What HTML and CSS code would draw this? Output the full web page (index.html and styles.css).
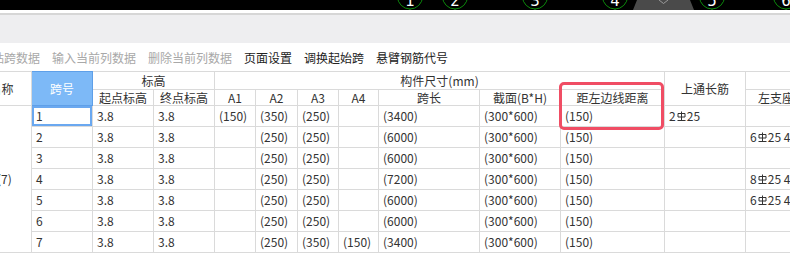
FILE: index.html
```html
<!DOCTYPE html>
<html lang="zh-CN">
<head>
    <meta charset="UTF-8">
    <title>梁平法表格</title>
    <link rel="stylesheet" href="styles.css">
</head>
<body>
<div class="viewport">
    <svg class="axis" width="790" height="10" viewBox="0 0 790 10">
        <g class="bubble"><circle cx="410" cy="-3.5" r="12.5"/><line x1="410" y1="9" x2="410" y2="10"/><text x="410" y="6">1</text></g>
        <g class="bubble"><circle cx="455" cy="-3.5" r="12.5"/><line x1="455" y1="9" x2="455" y2="10"/><text x="455" y="6">2</text></g>
        <g class="bubble"><circle cx="535" cy="-3.5" r="12.5"/><line x1="535" y1="9" x2="535" y2="10"/><text x="535" y="6">3</text></g>
        <g class="bubble"><circle cx="615" cy="-3.5" r="12.5"/><line x1="615" y1="9" x2="615" y2="10"/><text x="615" y="6">4</text></g>
        <polygon class="tab" points="637,0 690,0 694,10 633,10"/>
        <polyline class="chev" points="659,0 663.5,3.5 668,0"/>
        <g class="bubble"><circle cx="712" cy="-3.5" r="12.5"/><line x1="712" y1="9" x2="712" y2="10"/><text x="712" y="6">5</text></g>
        <g class="bubble"><circle cx="786" cy="-3.5" r="12.5"/><line x1="786" y1="9" x2="786" y2="10"/><text x="786" y="6">6</text></g>
    </svg>
</div>
<div class="ribbon"></div>
<div class="toolbar">
    <span class="tool off">粘贴跨数据</span>
    <span class="tool off">输入当前列数据</span>
    <span class="tool off">删除当前列数据</span>
    <span class="tool">页面设置</span>
    <span class="tool">调换起始跨</span>
    <span class="tool">悬臂钢筋代号</span>
</div>
<div class="grid-wrap">
    <table class="grid">
        <colgroup>
            <col style="width:60px"><col style="width:61px"><col style="width:61px"><col style="width:61px">
            <col style="width:41px"><col style="width:42px"><col style="width:41px"><col style="width:40px">
            <col style="width:101px"><col style="width:81px"><col style="width:104px"><col style="width:81px">
            <col style="width:86px"><col style="width:90px">
        </colgroup>
        <thead>
            <tr class="h1">
                <th rowspan="2">名称</th>
                <th rowspan="2" class="key">跨号</th>
                <th colspan="2">标高</th>
                <th colspan="7">构件尺寸(mm)</th>
                <th rowspan="2">上通长筋</th>
                <th colspan="2"></th>
            </tr>
            <tr class="h2">
                <th>起点标高</th><th>终点标高</th>
                <th>A1</th><th>A2</th><th>A3</th><th>A4</th>
                <th>跨长</th><th>截面(B*H)</th><th>距左边线距离</th>
                <th class="cut">左支座钢筋</th><th></th>
            </tr>
        </thead>
        <tbody>
            <tr>
                <td rowspan="7" class="name">KL1(7)</td>
                <td class="sel">1</td><td>3.8</td><td>3.8</td>
                <td>(150)</td><td>(350)</td><td>(250)</td><td></td>
                <td>(3400)</td><td>(300*600)</td><td>(150)</td>
                <td>2<svg class="bar" width="9" height="11" viewBox="0 0 9 11"><path d="M1 2.5h7v3.5H1zM4.5 0.5v9M0.5 9.5h8"/></svg>25</td><td></td><td></td>
            </tr>
            <tr>
                <td>2</td><td>3.8</td><td>3.8</td>
                <td></td><td>(250)</td><td>(250)</td><td></td>
                <td>(6000)</td><td>(300*600)</td><td>(150)</td>
                <td></td><td>6<svg class="bar" width="9" height="11" viewBox="0 0 9 11"><path d="M1 2.5h7v3.5H1zM4.5 0.5v9M0.5 9.5h8"/></svg>25 4/2</td><td></td>
            </tr>
            <tr>
                <td>3</td><td>3.8</td><td>3.8</td>
                <td></td><td>(250)</td><td>(250)</td><td></td>
                <td>(6000)</td><td>(300*600)</td><td>(150)</td>
                <td></td><td></td><td></td>
            </tr>
            <tr>
                <td>4</td><td>3.8</td><td>3.8</td>
                <td></td><td>(250)</td><td>(250)</td><td></td>
                <td>(7200)</td><td>(300*600)</td><td>(150)</td>
                <td></td><td>8<svg class="bar" width="9" height="11" viewBox="0 0 9 11"><path d="M1 2.5h7v3.5H1zM4.5 0.5v9M0.5 9.5h8"/></svg>25 4/4</td><td></td>
            </tr>
            <tr>
                <td>5</td><td>3.8</td><td>3.8</td>
                <td></td><td>(250)</td><td>(250)</td><td></td>
                <td>(6000)</td><td>(300*600)</td><td>(150)</td>
                <td></td><td>6<svg class="bar" width="9" height="11" viewBox="0 0 9 11"><path d="M1 2.5h7v3.5H1zM4.5 0.5v9M0.5 9.5h8"/></svg>25 4/2</td><td></td>
            </tr>
            <tr>
                <td>6</td><td>3.8</td><td>3.8</td>
                <td></td><td>(250)</td><td>(250)</td><td></td>
                <td>(6000)</td><td>(300*600)</td><td>(150)</td>
                <td></td><td></td><td></td>
            </tr>
            <tr>
                <td>7</td><td>3.8</td><td>3.8</td>
                <td></td><td>(250)</td><td>(350)</td><td>(150)</td>
                <td>(3400)</td><td>(300*600)</td><td>(150)</td>
                <td></td><td></td><td></td>
            </tr>
        </tbody>
    </table>
    <div class="mark"></div>
</div>
</body>
</html>
```

FILE: styles.css
```css
html, body {
    margin: 0;
    width: 790px;
    height: 266px;
    overflow: hidden;
    background: #fff;
    font-family: "Noto Sans CJK SC", "Noto Sans", sans-serif;
    font-size: 12px;
    color: #333;
}

/* drawing strip at the top */
.viewport {
    height: 10px;
    background: #000;
    overflow: hidden;
}

.axis {
    display: block;
}

.bubble circle {
    fill: #000;
    stroke: #0c8a0c;
    stroke-width: 1;
}

.bubble line {
    stroke: #0c8a0c;
    stroke-width: 1;
}

.bubble text {
    fill: #fff;
    font-family: "DejaVu Sans", sans-serif;
    font-size: 15px;
    text-anchor: middle;
}

.tab {
    fill: #4a4a4a;
}

.chev {
    fill: none;
    stroke: #9a9a9a;
    stroke-width: 1;
}

.ribbon {
    margin-top: 3px;
    height: 28px;
    border-top: 2px solid #d6d6d6;
    background: #eeeef0;
}

.toolbar {
    height: 28px;
    display: flex;
    align-items: center;
    gap: 12px;
    margin-left: -20px;
    white-space: nowrap;
}

.tool {
    color: #222;
}

.tool.off {
    color: #a8a8a8;
}

/* table */
.grid-wrap {
    position: relative;
    width: 790px;
    overflow: hidden;
}

.grid {
    border-collapse: collapse;
    table-layout: fixed;
    width: 950px;
    margin-left: -29px;
}

.grid th,
.grid td {
    border: 1px solid #dadada;
    padding: 0 4px;
    white-space: nowrap;
    overflow: hidden;
    line-height: 14px;
}

.grid th {
    font-weight: normal;
    text-align: center;
    padding: 0;
}

.grid tr.h1 {
    height: 18px;
}

.grid tr.h2 {
    height: 16px;
}

.grid tbody tr {
    height: 21px;
}

.grid td {
    text-align: left;
}

.grid th.key {
    background: #7db9f7;
    border: 1px solid #5e9fe8;
    color: #fff;
}

.grid th.cut {
    text-align: left;
    padding-left: 12px;
}

.grid td.name {
    vertical-align: middle;
}

.grid td.sel {
    position: relative;
    box-shadow: inset 0 0 0 2px #6aa8f0;
}

.grid td.sel::after {
    content: '';
    position: absolute;
    right: -3px;
    bottom: -3px;
    width: 4px;
    height: 4px;
    background: #5e9fe8;
}

.bar {
    vertical-align: -1px;
    margin: 0 1px;
}

.bar path {
    fill: none;
    stroke: #333;
    stroke-width: 1;
}

/* red highlight box drawn over the grid */
.mark {
    position: absolute;
    left: 559px;
    top: 11px;
    width: 105px;
    height: 48px;
    box-sizing: border-box;
    border: 3px solid #f04d64;
    border-radius: 5px;
}
```
